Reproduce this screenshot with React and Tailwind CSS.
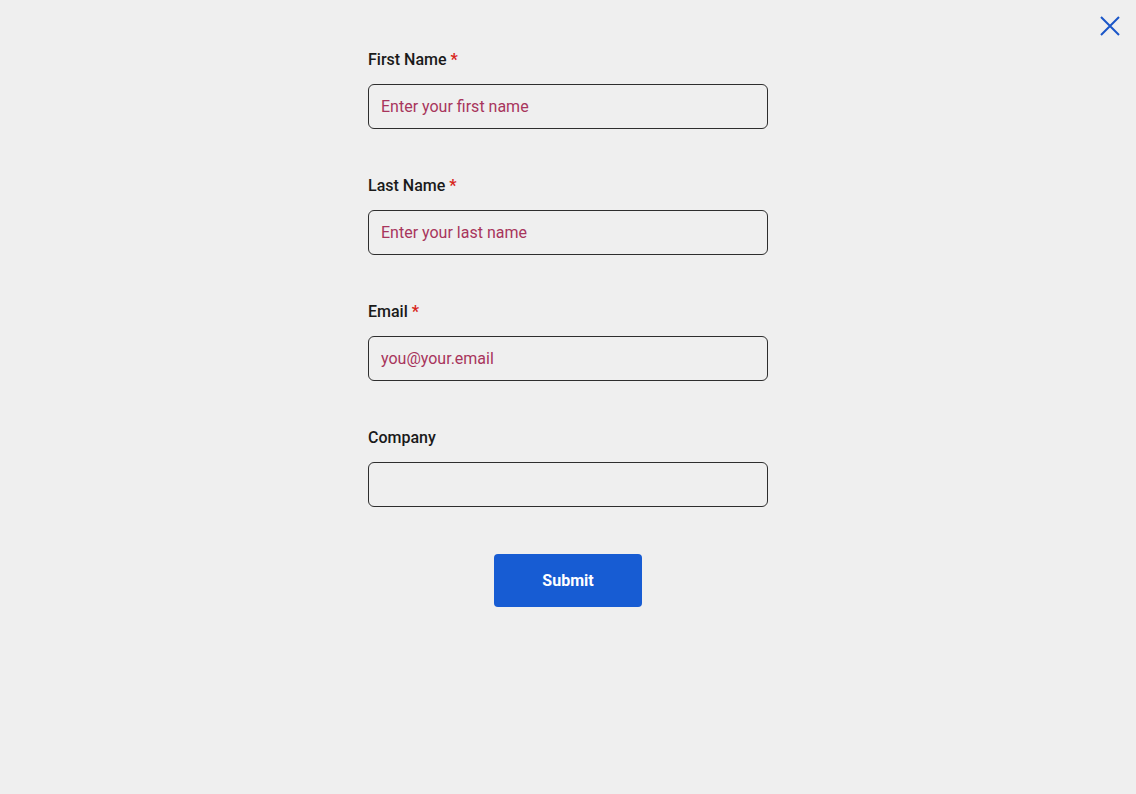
import React from "react";

function Field({ label, required, placeholder }) {
  return (
    <div className="flex flex-col">
      <label className="h-6 text-[16px] leading-6 font-medium text-[#1a1a1a]">
        {label}
        {required && <span className="ml-1 font-bold text-[#d8261c]">*</span>}
      </label>
      <input
        className="mt-[12px] h-[45px] w-[400px] rounded-[6px] border border-[#2e2e2e] bg-transparent px-3 text-[16px] text-[#a8355c] placeholder:text-[#a8355c] outline-none"
        placeholder={placeholder}
      />
    </div>
  );
}

export default function App() {
  return (
    <div
      className="relative h-[794px] w-full bg-[#efefef]"
      style={{ fontFamily: "Roboto, 'Noto Sans', sans-serif" }}
    >
      <button className="absolute right-[14px] top-[14px] flex h-6 w-6 items-center justify-center text-[#1a56c8]">
        <svg width="22" height="22" viewBox="0 0 22 22" fill="none" stroke="currentColor" strokeWidth="2">
          <path d="M2 2L20 20M20 2L2 20" />
        </svg>
      </button>
      <div className="mx-auto flex w-[400px] flex-col pt-[48px]">
        <div className="flex flex-col gap-[45px]">
          <Field label="First Name" required placeholder="Enter your first name" />
          <Field label="Last Name" required placeholder="Enter your last name" />
          <Field label="Email" required placeholder="you@your.email" />
          <Field label="Company" placeholder="" />
        </div>
        <div className="mt-[47px] flex justify-center">
          <button className="h-[53px] w-[148px] rounded-[4px] bg-[#175cd3] text-[16px] font-bold text-white">
            Submit
          </button>
        </div>
      </div>
    </div>
  );
}
